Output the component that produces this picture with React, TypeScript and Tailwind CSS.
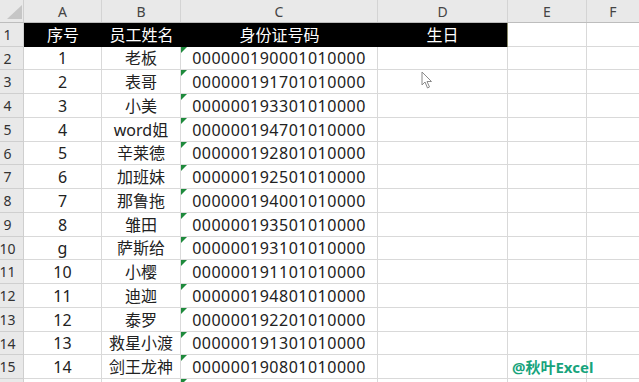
import React from "react";

const rows = [
  { n: "1", name: "老板", id: "000000190001010000" },
  { n: "2", name: "表哥", id: "000000191701010000" },
  { n: "3", name: "小美", id: "000000193301010000" },
  { n: "4", name: "word姐", id: "000000194701010000" },
  { n: "5", name: "辛莱德", id: "000000192801010000" },
  { n: "6", name: "加班妹", id: "000000192501010000" },
  { n: "7", name: "那鲁拖", id: "000000194001010000" },
  { n: "8", name: "雏田", id: "000000193501010000" },
  { n: "g", name: "萨斯给", id: "000000193101010000" },
  { n: "10", name: "小樱", id: "000000191101010000" },
  { n: "11", name: "迪迦", id: "000000194801010000" },
  { n: "12", name: "泰罗", id: "000000192201010000" },
  { n: "13", name: "救星小渡", id: "000000191301010000" },
  { n: "14", name: "剑王龙神", id: "000000190801010000" },
];

// 行高（px），按截图量出来的网格线位置
const heights = [23, 24, 24, 24, 23, 24, 24, 24, 23, 24, 24, 24, 23, 24];
const hClass: Record<number, string> = { 23: "h-[23px]", 24: "h-[24px]" };

const cellFont = { fontFamily: '"Noto Sans", "Noto Sans CJK SC", sans-serif' };

function GreenMark() {
  return (
    <span className="absolute left-0 top-0 h-0 w-0 border-l-[6px] border-b-[6px] border-l-[#1e8a3c] border-b-transparent" />
  );
}

function RowNum({ n }: { n: string }) {
  return (
    <div className="flex w-[24px] shrink-0 items-center justify-center border-r border-b border-[#cfcfcf] bg-[#e9e9e9] pr-[8px] text-[14px] text-[#333]">
      {n}
    </div>
  );
}

export default function App() {
  return (
    <div
      className="relative h-[382px] w-[639px] overflow-hidden bg-white text-[#222]"
      style={{ fontFamily: '"Noto Sans", "Noto Sans CJK SC", sans-serif' }}
    >
      {/* 列标题 */}
      <div className="flex h-[23px] border-b border-[#bdbdbd] bg-[#e9e9e9] text-[14px] text-[#444]">
        <div className="relative w-[24px] shrink-0 border-r border-[#cfcfcf]">
          <svg className="absolute left-[7px] top-[5px]" width="15" height="14" viewBox="0 0 15 14">
            <polygon points="15,0 15,14 0,14" fill="#c6c6c6" />
          </svg>
        </div>
        <div className="flex w-[78px] shrink-0 items-center justify-center border-r border-[#d4d4d4]">A</div>
        <div className="flex w-[79px] shrink-0 items-center justify-center border-r border-[#d4d4d4]">B</div>
        <div className="flex w-[197px] shrink-0 items-center justify-center border-r border-[#d4d4d4]">C</div>
        <div className="flex w-[130px] shrink-0 items-center justify-center border-r border-[#d4d4d4]">D</div>
        <div className="flex w-[79px] shrink-0 items-center justify-center border-r border-[#d4d4d4]">E</div>
        <div className="flex flex-1 items-center justify-center">F</div>
      </div>

      {/* 第 1 行：黑底表头 */}
      <div className="flex h-[24px] text-[16px]" style={cellFont}>
        <RowNum n="1" />
        <div className="flex w-[78px] shrink-0 items-center justify-center bg-black text-white">序号</div>
        <div className="flex w-[79px] shrink-0 items-center justify-center bg-black text-white">员工姓名</div>
        <div className="flex w-[197px] shrink-0 items-center justify-center bg-black text-white">身份证号码</div>
        <div className="flex w-[130px] shrink-0 items-center justify-center border-r border-[#8a8a6a] bg-black text-white">生日</div>
        <div className="w-[79px] shrink-0 border-r border-b border-[#d9d9d9]" />
        <div className="flex-1 border-b border-[#d9d9d9]" />
      </div>

      {rows.map((r, i) => (
        <div key={i} className={`flex text-[16px] ${hClass[heights[i]]}`} style={cellFont}>
          <RowNum n={String(i + 2)} />
          <div className="flex w-[78px] shrink-0 items-center justify-center border-r border-b border-[#d9d9d9]">{r.n}</div>
          <div className="flex w-[79px] shrink-0 items-center justify-center border-r border-b border-[#d9d9d9]">{r.name}</div>
          <div className="relative flex w-[197px] shrink-0 items-center justify-center border-r border-b border-[#d9d9d9] tracking-[0.5px]">
            <GreenMark />
            {r.id}
          </div>
          <div className="w-[130px] shrink-0 border-r border-b border-[#d9d9d9]" />
          <div className="w-[79px] shrink-0 border-r border-b border-[#d9d9d9]" />
          <div className="flex-1 border-b border-[#d9d9d9]" />
        </div>
      ))}

      {/* 第 16 行，只露出一点 */}
      <div className="flex h-[24px]">
        <RowNum n="" />
        <div className="w-[78px] shrink-0 border-r border-[#d9d9d9]" />
        <div className="w-[79px] shrink-0 border-r border-[#d9d9d9]" />
        <div className="relative w-[197px] shrink-0 border-r border-[#d9d9d9]">
          <GreenMark />
        </div>
        <div className="w-[130px] shrink-0 border-r border-[#d9d9d9]" />
        <div className="w-[79px] shrink-0 border-r border-[#d9d9d9]" />
        <div className="flex-1" />
      </div>

      {/* 鼠标指针 */}
      <svg className="absolute left-[421px] top-[71px]" width="12" height="19" viewBox="0 0 12 19">
        <path d="M1 1 L1 14 L4 11 L6.5 17 L8.5 16 L6 10.5 L10.5 10.5 Z" fill="#fff" stroke="#8a8a8a" strokeWidth="1" />
      </svg>

      {/* 水印 */}
      <div
        className="absolute left-[512px] top-[356px] text-[15px] font-bold text-[#17a47c]"
        style={{ fontFamily: '"Noto Sans", "Noto Sans CJK SC", sans-serif' }}
      >
        @秋叶Excel
      </div>
    </div>
  );
}
